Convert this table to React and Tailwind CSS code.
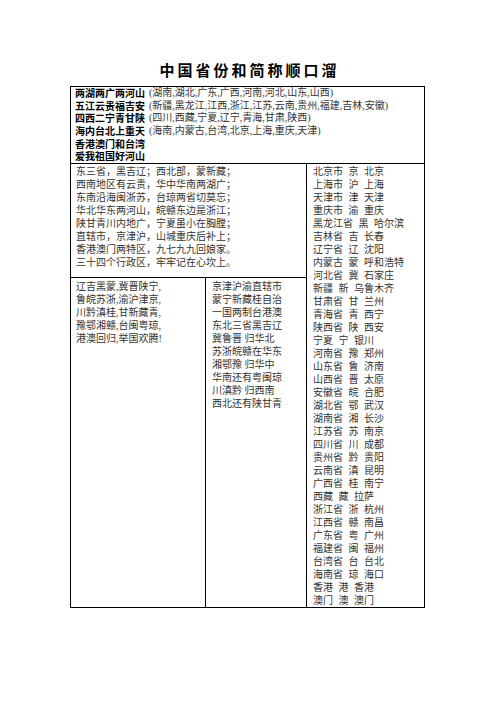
const sans = "font-['Noto_Sans_CJK_SC',sans-serif]";
const serif = "font-['Liberation_Serif','Noto_Sans_CJK_SC',serif]";

const rhymes = [
  ["两湖两广两河山", "(湖南,湖北,广东,广西,河南,河北,山东,山西)"],
  ["五江云贵福吉安", "(新疆,黑龙江,江西,浙江,江苏,云南,贵州,福建,吉林,安徽)"],
  ["四西二宁青甘陕", "(四川,西藏,宁夏,辽宁,青海,甘肃,陕西)"],
  ["海内台北上重天", "(海南,内蒙古,台湾,北京,上海,重庆,天津)"],
  ["香港澳门和台湾", ""],
  ["爱我祖国好河山", ""],
];

const verse = [
  "东三省，黑吉辽；西北部，蒙新藏；",
  "西南地区有云贵，华中华南两湖广；",
  "东南沿海闽浙苏，台琼两省切莫忘；",
  "华北华东两河山，皖赣东边是浙江；",
  "陕甘青川内地广，宁夏虽小在胸膛；",
  "直辖市，京津沪，山城重庆后补上；",
  "香港澳门两特区，九七九九回娘家。",
  "三十四个行政区，牢牢记在心坎上。",
];

const shortVerse = [
  "辽吉黑蒙,冀晋陕宁,",
  "鲁皖苏浙,渝沪津京,",
  "川黔滇桂,甘新藏青,",
  "豫鄂湘赣,台闽粤琼,",
  "港澳回归,举国欢腾!",
];

const regions = [
  "京津沪渝直辖市",
  "蒙宁新藏桂自治",
  "一国两制台港澳",
  "东北三省黑吉辽",
  "冀鲁晋 归华北",
  "苏浙皖赣在华东",
  "湘鄂豫 归华中",
  "华南还有粤闽琼",
  "川滇黔 归西南",
  "西北还有陕甘青",
];

const provinces = [
  "北京市 京 北京",
  "上海市 沪 上海",
  "天津市 津 天津",
  "重庆市 渝 重庆",
  "黑龙江省 黑 哈尔滨",
  "吉林省 吉 长春",
  "辽宁省 辽 沈阳",
  "内蒙古 蒙 呼和浩特",
  "河北省 冀 石家庄",
  "新疆 新 乌鲁木齐",
  "甘肃省 甘 兰州",
  "青海省 青 西宁",
  "陕西省 陕 西安",
  "宁夏 宁 银川",
  "河南省 豫 郑州",
  "山东省 鲁 济南",
  "山西省 晋 太原",
  "安徽省 皖 合肥",
  "湖北省 鄂 武汉",
  "湖南省 湘 长沙",
  "江苏省 苏 南京",
  "四川省 川 成都",
  "贵州省 黔 贵阳",
  "云南省 滇 昆明",
  "广西省 桂 南宁",
  "西藏 藏 拉萨",
  "浙江省 浙 杭州",
  "江西省 赣 南昌",
  "广东省 粤 广州",
  "福建省 闽 福州",
  "台湾省 台 台北",
  "海南省 琼 海口",
  "香港 港 香港",
  "澳门 澳 澳门",
];

// fixed-height rows so mixed fonts don't stretch the line box
function Lines({ items }) {
  return items.map((line) => (
    <div key={line} className="h-[13px] leading-[13px] whitespace-nowrap">
      {line}
    </div>
  ));
}

export default function App() {
  return (
    <div className="w-[496px] h-[702px] bg-white pt-[60px]">
      <h1
        className={`${sans} text-center text-[15px] leading-[20px] font-bold tracking-[3px] pl-[3px] text-black`}
      >
        中国省份和简称顺口溜
      </h1>

      <div className="mt-[6px] ml-[70px] w-[355px] border border-black text-[10px]">
        {/* top block: the six-line rhyme */}
        <div className="border-b border-black pl-[4px]">
          {rhymes.map(([head, list]) => (
            <div key={head} className="flex h-[12.7px] whitespace-nowrap">
              <span className={`${sans} block h-[12.7px] leading-[12.7px] font-bold text-black`}>
                {head}
              </span>
              {list && (
                <span className={`${serif} block h-[12.7px] leading-[12.7px] ml-[4px] text-[#333]`}>
                  {list}
                </span>
              )}
            </div>
          ))}
        </div>

        <div className={`${serif} flex text-[#333]`}>
          <div className="w-[236px] flex flex-col border-r border-black">
            <div className="border-b border-black pl-[5px] pt-[1px] h-[114px]">
              <Lines items={verse} />
            </div>
            <div className="flex flex-1">
              <div className="w-[135px] border-r border-black pl-[5px] pt-[2px]">
                <Lines items={shortVerse} />
              </div>
              <div className="flex-1 pl-[6px] pt-[2px]">
                <Lines items={regions} />
              </div>
            </div>
          </div>

          <div className="flex-1 pl-[6px] pt-[1px] [word-spacing:3px]">
            <Lines items={provinces} />
          </div>
        </div>
      </div>
    </div>
  );
}
